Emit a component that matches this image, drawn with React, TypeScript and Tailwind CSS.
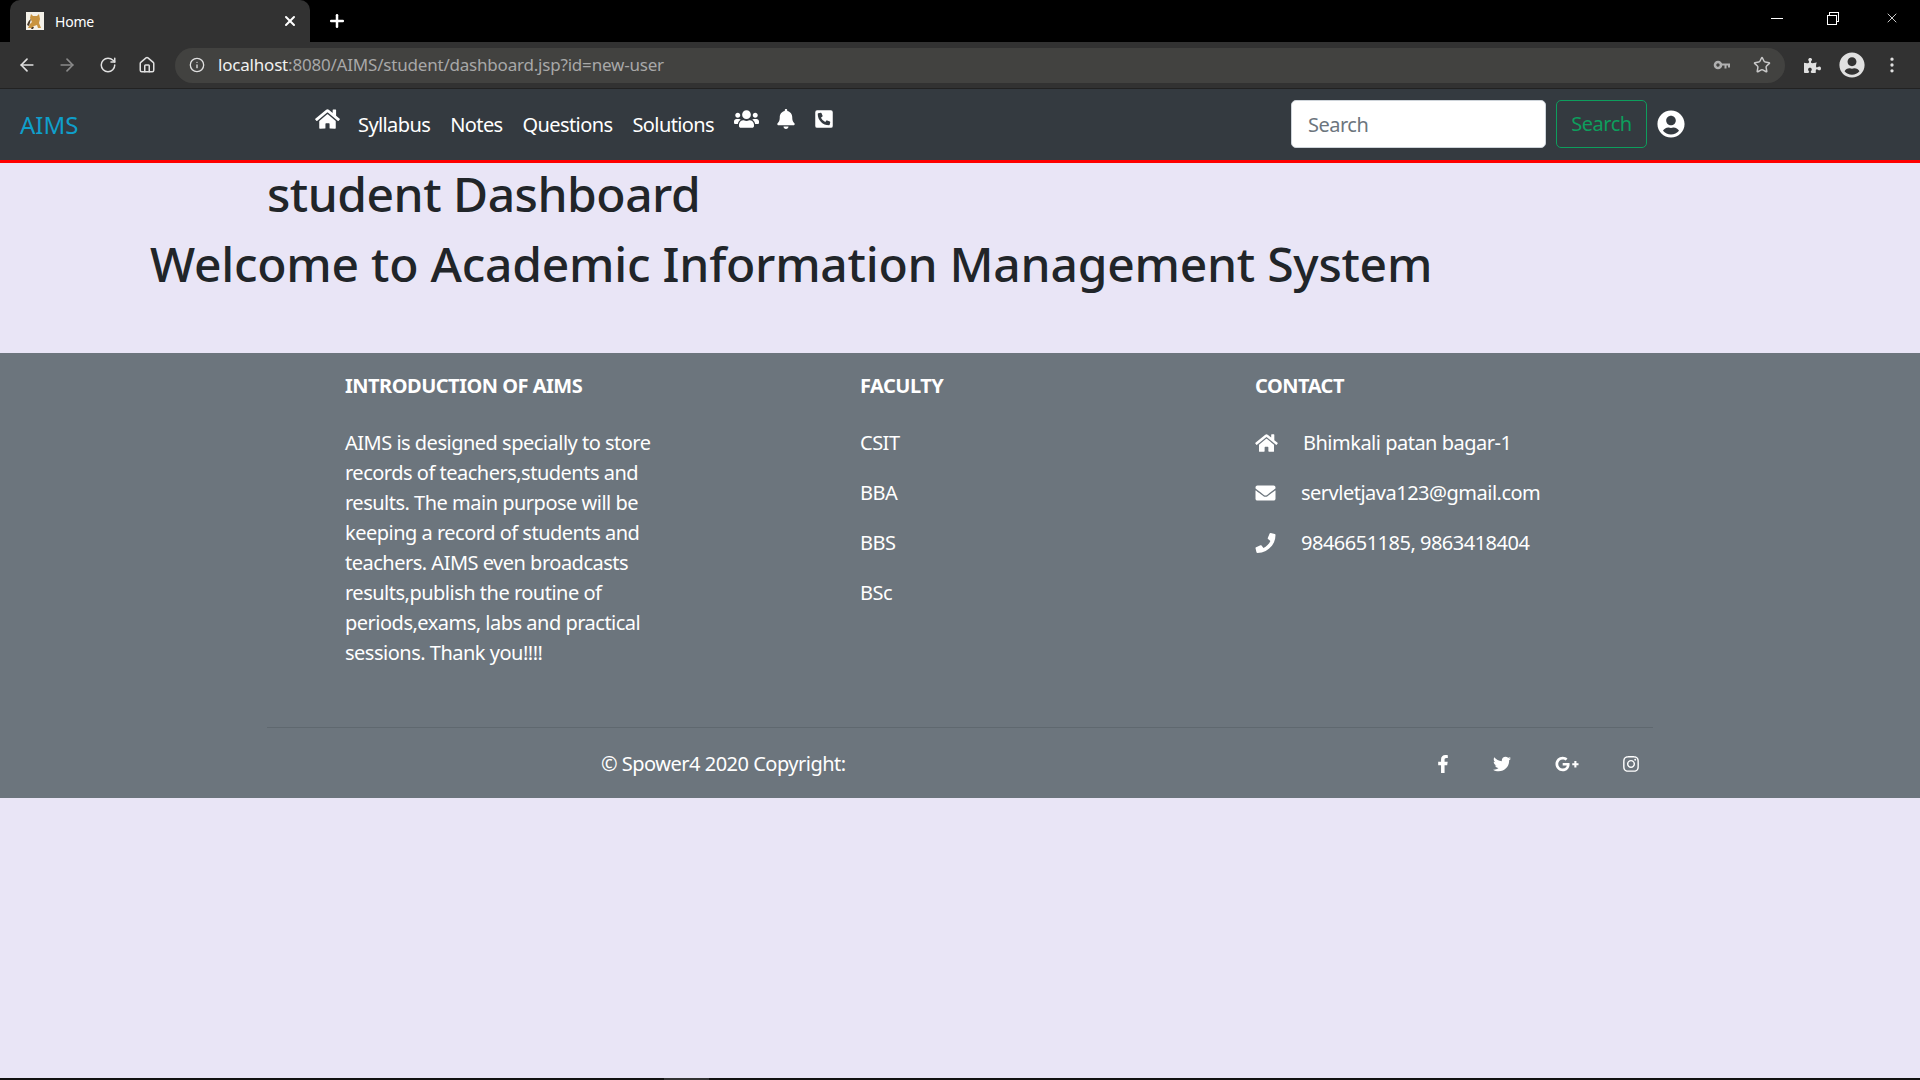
import { ArrowLeft, ArrowRight, Home as HomeOutline, Info, MoreVertical, Plus, RotateCw, Star, X } from 'lucide-react';
import {
  FaBell,
  FaEnvelope,
  FaFacebookF,
  FaGooglePlusG,
  FaHome,
  FaInstagram,
  FaPhone,
  FaPhoneSquareAlt,
  FaPuzzlePiece,
  FaTwitter,
  FaUserCircle,
  FaUsers,
} from 'react-icons/fa';

function Favicon() {
  return (
    <svg viewBox="0 0 18 18" className="h-[18px] w-[18px]">
      <rect width="18" height="18" fill="#f4f1e8" />
      <path d="M5 2l2 2h4l2-2 1 5-1 4 2 5h-3l-1-3-3 1-2 2H2l2-4 2-2-2-4z" fill="#c9943f" />
      <path d="M1 13c1-3 2-5 4-6l-2 7zM6 15h2l-1 2H5z" fill="#4a3a28" />
    </svg>
  );
}

function KeyIcon() {
  return (
    <svg viewBox="0 0 18 10" className="h-[10px] w-[18px] text-[#b0b0b0]" fill="none" stroke="currentColor">
      <circle cx="5" cy="5" r="3" strokeWidth="2.6" />
      <path d="M8 4.4h9M12.5 4.4v4M16 4.4v3" strokeWidth="2" />
    </svg>
  );
}

function BrowserChrome() {
  return (
    <div className="font-['Noto_Sans',sans-serif] text-white">
      <div className="flex h-[42px] items-end bg-black">
        <div className="ml-[10px] flex h-[42px] w-[300px] items-center rounded-t-[10px] bg-[#323232] pl-[16px] pr-[12px]">
          <Favicon />
          <span className="ml-[11px] text-[14px] tracking-[-0.2px]">Home</span>
          <X className="ml-auto h-4 w-4" strokeWidth={3} />
        </div>
        <Plus className="mb-[11px] ml-[17px] h-5 w-5" strokeWidth={3} />
        <div className="mb-[14px] ml-auto flex h-[20px] items-center gap-[44px] pr-[20px]">
          <div className="h-px w-[12px] bg-white" />
          <div className="relative h-[13px] w-[13px]">
            <div className="absolute left-[2px] top-0 h-[10px] w-[10px] border border-white" />
            <div className="absolute bottom-0 left-0 h-[10px] w-[10px] border border-white bg-black" />
          </div>
          <X className="h-[16px] w-[16px]" strokeWidth={1.2} />
        </div>
      </div>
      <div className="flex h-[46px] items-center bg-[#323232] pl-[17px]">
        <ArrowLeft className="h-[20px] w-[20px] text-[#e0e0e0]" />
        <ArrowRight className="ml-[20px] h-[20px] w-[20px] text-[#8a8a8a]" />
        <RotateCw className="ml-[22px] h-[18px] w-[18px] text-[#e0e0e0]" />
        <HomeOutline className="ml-[21px] h-[18px] w-[18px] text-[#e0e0e0]" />
        <div className="ml-[19px] flex h-[35px] w-[1610px] items-center rounded-full bg-[#424240] pl-[14px] pr-[14px]">
          <Info className="h-[16px] w-[16px] text-[#e0e0e0]" />
          <span className="ml-[13px] text-[17px] tracking-[-0.2px] text-[#f0f0f0]">
            localhost<span className="text-[#a8a8a8]">:8080/AIMS/student/dashboard.jsp?id=new-user</span>
          </span>
          <div className="ml-auto">
            <KeyIcon />
          </div>
          <Star className="ml-[22px] h-[18px] w-[18px] text-[#c8c8c8]" />
        </div>
        <FaPuzzlePiece className="ml-[19px] h-[17px] w-[17px] text-[#e0e0e0]" />
        <FaUserCircle className="ml-[18px] h-[26px] w-[26px] text-[#e0e0e0]" />
        <MoreVertical className="ml-[17px] h-[20px] w-[20px] text-[#e0e0e0]" />
      </div>
      <div className="h-px bg-[#222]" />
    </div>
  );
}

function Navbar() {
  const links = ['Syllabus', 'Notes', 'Questions', 'Solutions'];
  return (
    <nav className="flex h-[71px] items-center bg-[#343a40] pl-[20px] pr-[235px] text-[20px] tracking-[-0.6px] text-white">
      <a className="w-[295px] text-[24px] tracking-[0px] text-[#0f9fcb]">AIMS</a>
      <FaHome className="mb-[12px] h-[22px] w-[25px]" />
      <div className="ml-[18px] flex gap-[20px]">
        {links.map((l) => (
          <a key={l}>{l}</a>
        ))}
      </div>
      <FaUsers className="mb-[12px] ml-[20px] h-[20px] w-[25px]" />
      <FaBell className="mb-[12px] ml-[18px] h-[20px] w-[18px]" />
      <FaPhoneSquareAlt className="mb-[12px] ml-[20px] h-[20px] w-[18px]" />
      <input
        placeholder="Search"
        className="mb-[2px] ml-auto h-[48px] w-[255px] rounded-[5px] border border-[#ced4da] bg-white px-[16px] pt-[2px] text-[20px] tracking-[-0.5px] text-[#495057] placeholder:text-[#6c757d]"
      />
      <button className="mb-[2px] ml-[10px] h-[48px] w-[91px] rounded-[5px] border border-[#0d9e5d] pt-px text-[20px] tracking-[-0.5px] text-[#0d9e5d]">
        Search
      </button>
      <FaUserCircle className="mb-[2px] ml-[10px] h-[28px] w-[28px]" />
    </nav>
  );
}

function Footer() {
  return (
    <footer className="bg-[#6c757d] text-[20px] leading-[30px] tracking-[-0.5px] text-white">
      <div className="flex pl-[345px] pt-[18px]">
        <div className="w-[515px]">
          <h6 className="font-bold">INTRODUCTION OF AIMS</h6>
          <p className="mt-[27px] w-[330px]">
            AIMS is designed specially to store records of teachers,students and results. The main purpose will be keeping a record of students and teachers. AIMS even broadcasts results,publish the routine of periods,exams, labs and practical sessions. Thank you!!!!
          </p>
        </div>
        <div className="w-[395px]">
          <h6 className="font-bold">FACULTY</h6>
          <ul className="mt-[27px] flex flex-col gap-[20px]">
            <li>CSIT</li>
            <li>BBA</li>
            <li>BBS</li>
            <li>BSc</li>
          </ul>
        </div>
        <div>
          <h6 className="font-bold">CONTACT</h6>
          <ul className="mt-[27px] flex flex-col gap-[20px]">
            <li className="flex items-center">
              <FaHome className="h-[20px] w-[23px]" />
              <span className="ml-[25px]">Bhimkali patan bagar-1</span>
            </li>
            <li className="flex items-center">
              <FaEnvelope className="h-[20px] w-[21px]" />
              <span className="ml-[25px]">servletjava123@gmail.com</span>
            </li>
            <li className="flex items-center">
              <FaPhone className="h-[20px] w-[21px]" />
              <span className="ml-[25px]">9846651185, 9863418404</span>
            </li>
          </ul>
        </div>
      </div>
      <div className="ml-[267px] mt-[59px] w-[1386px] border-t border-[#5f686f]" />
      <div className="flex h-[70px] items-center pt-px">
        <span className="ml-[601px]">© Spower4 2020 Copyright:</span>
        <div className="ml-[588px] flex items-center">
          <FaFacebookF className="h-[18px] w-[18px]" />
          <FaTwitter className="ml-[41px] h-[18px] w-[18px]" />
          <FaGooglePlusG className="ml-[44px] h-[22px] w-[24px]" />
          <FaInstagram className="ml-[43px] h-[18px] w-[18px]" />
        </div>
      </div>
    </footer>
  );
}

export default function App() {
  return (
    <div className="flex h-[1080px] flex-col bg-[#e9e5f6] font-['Noto_Sans',sans-serif] text-[#212529]">
      <BrowserChrome />
      <Navbar />
      <div className="h-[3px] bg-[#ff0000]" />
      <main className="h-[190px]">
        <h2 className="ml-[267px] mt-[1px] text-[48px] font-medium leading-[60px] tracking-[-0.5px]">student Dashboard</h2>
        <h1 className="ml-[150px] text-[48px] font-medium leading-[80px] tracking-[-0.25px]">Welcome to Academic Information Management System</h1>
      </main>
      <Footer />
      <div className="flex-1" />
      <div className="flex h-[2px] bg-[#111]">
        <div className="ml-[664px] h-full w-[45px] bg-[#333]" />
      </div>
    </div>
  );
}
